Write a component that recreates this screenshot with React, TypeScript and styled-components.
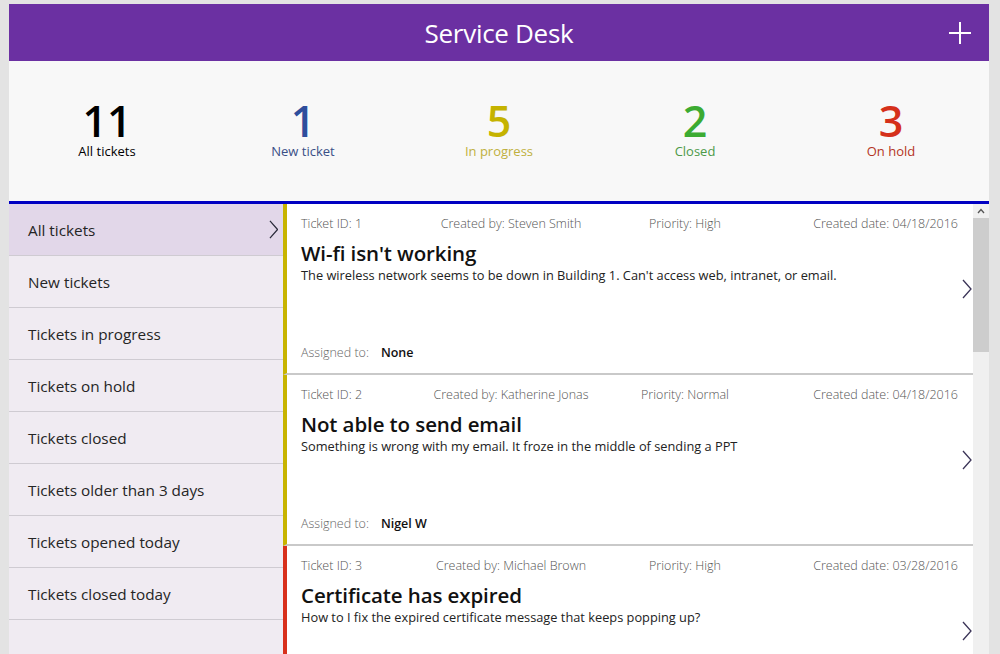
import React from "react";
import styled, { createGlobalStyle } from "styled-components";

const Global = createGlobalStyle`
  html, body { margin: 0; padding: 0; }
  body {
    background: #e3e3e3;
    font-family: "Open Sans", "Noto Sans", Arial, sans-serif;
    overflow: hidden;
  }
`;

const Frame = styled.div`
  width: 980px;
  height: 650px;
  margin: 4px 0 0 9px;
  display: flex;
  flex-direction: column;
  background: #ffffff;
  overflow: hidden;
`;

const Header = styled.header`
  height: 57px;
  flex: none;
  background: #6b30a2;
  display: flex;
  align-items: center;
  justify-content: center;
  position: relative;
`;

const Title = styled.h1`
  margin: 0;
  color: #ffffff;
  font-weight: 400;
  font-size: 26px;
  letter-spacing: -0.3px;
`;

const AddButton = styled.button`
  position: absolute;
  right: 17px;
  top: 17px;
  width: 24px;
  height: 24px;
  padding: 0;
  border: none;
  background: transparent;
  display: flex;
`;

const Stats = styled.section`
  flex: none;
  background: #f8f8f8;
  border-bottom: 3px solid #0000c2;
  display: grid;
  grid-template-columns: repeat(5, 1fr);
  align-items: start;
  padding-top: 38px;
  box-sizing: border-box;
  height: 143px;
`;

const Stat = styled.div`
  display: flex;
  flex-direction: column;
  align-items: center;
`;

const StatNumber = styled.div<{ $c: string }>`
  font-size: 43px;
  line-height: 44px;
  color: ${(p) => p.$c};
  font-weight: 600;
`;

const StatLabel = styled.div<{ $c: string }>`
  font-size: 13px;
  line-height: 16px;
  color: ${(p) => p.$c};
`;

const Body = styled.div`
  flex: 1;
  display: flex;
  min-height: 0;
`;

const Nav = styled.nav`
  width: 274px;
  flex: none;
  background: #f0ebf2;
  display: flex;
  flex-direction: column;
`;

const NavItem = styled.div<{ $active?: boolean }>`
  height: 51px;
  flex: none;
  border-bottom: 1px solid #cfcbd2;
  background: ${(p) => (p.$active ? "#e2d7e9" : "#f0ebf2")};
  display: flex;
  align-items: center;
  justify-content: space-between;
  padding: 0 5px 0 19px;
  font-size: 15.3px;
  color: #252525;
`;

const List = styled.div`
  flex: 1;
  display: flex;
  flex-direction: column;
  min-width: 0;
`;

const Card = styled.article<{ $accent: string }>`
  height: 169px;
  flex: none;
  border-left: 4px solid ${(p) => p.$accent};
  border-bottom: 2px solid #c9c9c9;
  display: flex;
`;

const CardMain = styled.div`
  flex: 1;
  display: flex;
  flex-direction: column;
  padding: 11px 4px 0 14px;
  min-width: 0;
`;

const Meta = styled.div`
  display: grid;
  grid-template-columns: 110px 200px 148px 1fr;
  font-size: 12.5px;
  line-height: 17px;
  color: #555555;
  font-weight: 300;
`;

const MetaCell = styled.span<{ $align: string }>`
  text-align: ${(p) => p.$align};
  white-space: nowrap;
`;

const CardTitle = styled.h2`
  margin: 8px 0 0;
  font-size: 20.5px;
  line-height: 26px;
  font-weight: 600;
  letter-spacing: -0.1px;
  color: #111111;
`;

const Desc = styled.p`
  margin: 0;
  font-size: 12.8px;
  line-height: 18px;
  color: #222222;
`;

const Assigned = styled.div`
  margin-top: auto;
  padding-bottom: 12px;
  font-size: 12.5px;
  line-height: 17px;
  color: #666666;
  font-weight: 300;
`;

const Assignee = styled.span`
  color: #111111;
  font-weight: 600;
  margin-left: 12px;
`;

const CardChevron = styled.div`
  width: 11px;
  flex: none;
  display: flex;
  align-items: center;
  justify-content: flex-start;
`;

const Scrollbar = styled.div`
  width: 16px;
  flex: none;
  background: #f0f0f0;
  display: flex;
  flex-direction: column;
`;

const ScrollArrow = styled.div`
  height: 14px;
  display: flex;
  align-items: center;
  justify-content: center;
`;

const Thumb = styled.div`
  height: 134px;
  background: #cdcdcd;
`;

const Chevron = ({ h = 20, color = "#3b3457" }: { h?: number; color?: string }) => (
  <svg width={h / 2} height={h} viewBox="0 0 10 20" fill="none">
    <polyline points="1,1 9,10 1,19" stroke={color} strokeWidth="1.3" />
  </svg>
);

const stats = [
  { n: "11", l: "All tickets", c: "#000000", lc: "#000000" },
  { n: "1", l: "New ticket", c: "#2e4e9c", lc: "#3a4f86" },
  { n: "5", l: "In progress", c: "#c5b300", lc: "#bfb040" },
  { n: "2", l: "Closed", c: "#3cab32", lc: "#4c9a48" },
  { n: "3", l: "On hold", c: "#d5301a", lc: "#b43424" },
];

const navItems = [
  "All tickets",
  "New tickets",
  "Tickets in progress",
  "Tickets on hold",
  "Tickets closed",
  "Tickets older than 3 days",
  "Tickets opened today",
  "Tickets closed today",
  "",
];

const tickets = [
  {
    id: 1,
    by: "Steven Smith",
    pr: "High",
    date: "04/18/2016",
    title: "Wi-fi isn't working",
    desc: "The wireless network seems to be down in Building 1. Can't access web, intranet, or email.",
    who: "None",
    accent: "#c8b400",
  },
  {
    id: 2,
    by: "Katherine Jonas",
    pr: "Normal",
    date: "04/18/2016",
    title: "Not able to send email",
    desc: "Something is wrong with my email. It froze in the middle of sending a PPT",
    who: "Nigel W",
    accent: "#c8b400",
  },
  {
    id: 3,
    by: "Michael Brown",
    pr: "High",
    date: "03/28/2016",
    title: "Certificate has expired",
    desc: "How to I fix the expired certificate message that keeps popping up?",
    who: "",
    accent: "#d8301c",
  },
];

export default function App() {
  return (
    <>
      <Global />
      <Frame>
        <Header>
          <Title>Service Desk</Title>
          <AddButton aria-label="Add">
            <svg width="24" height="24" viewBox="0 0 24 24">
              <path d="M12 1v22M1 12h22" stroke="#ffffff" strokeWidth="2" />
            </svg>
          </AddButton>
        </Header>
        <Stats>
          {stats.map((s) => (
            <Stat key={s.l}>
              <StatNumber $c={s.c}>{s.n}</StatNumber>
              <StatLabel $c={s.lc}>{s.l}</StatLabel>
            </Stat>
          ))}
        </Stats>
        <Body>
          <Nav>
            {navItems.map((t, i) => (
              <NavItem key={i} $active={i === 0}>
                <span>{t}</span>
                {i === 0 && <Chevron h={19} color="#2a2a3a" />}
              </NavItem>
            ))}
          </Nav>
          <List>
            {tickets.map((t) => (
              <Card key={t.id} $accent={t.accent}>
                <CardMain>
                  <Meta>
                    <MetaCell $align="left">Ticket ID: {t.id}</MetaCell>
                    <MetaCell $align="center">Created by: {t.by}</MetaCell>
                    <MetaCell $align="center">Priority: {t.pr}</MetaCell>
                    <MetaCell $align="right">Created date: {t.date}</MetaCell>
                  </Meta>
                  <CardTitle>{t.title}</CardTitle>
                  <Desc>{t.desc}</Desc>
                  <Assigned>
                    Assigned to:<Assignee>{t.who}</Assignee>
                  </Assigned>
                </CardMain>
                <CardChevron>
                  <Chevron h={20} />
                </CardChevron>
              </Card>
            ))}
          </List>
          <Scrollbar>
            <ScrollArrow>
              <svg width="8" height="6" viewBox="0 0 8 6">
                <polyline points="1,5 4,1.5 7,5" fill="none" stroke="#555" strokeWidth="1.3" />
              </svg>
            </ScrollArrow>
            <Thumb />
          </Scrollbar>
        </Body>
      </Frame>
    </>
  );
}
